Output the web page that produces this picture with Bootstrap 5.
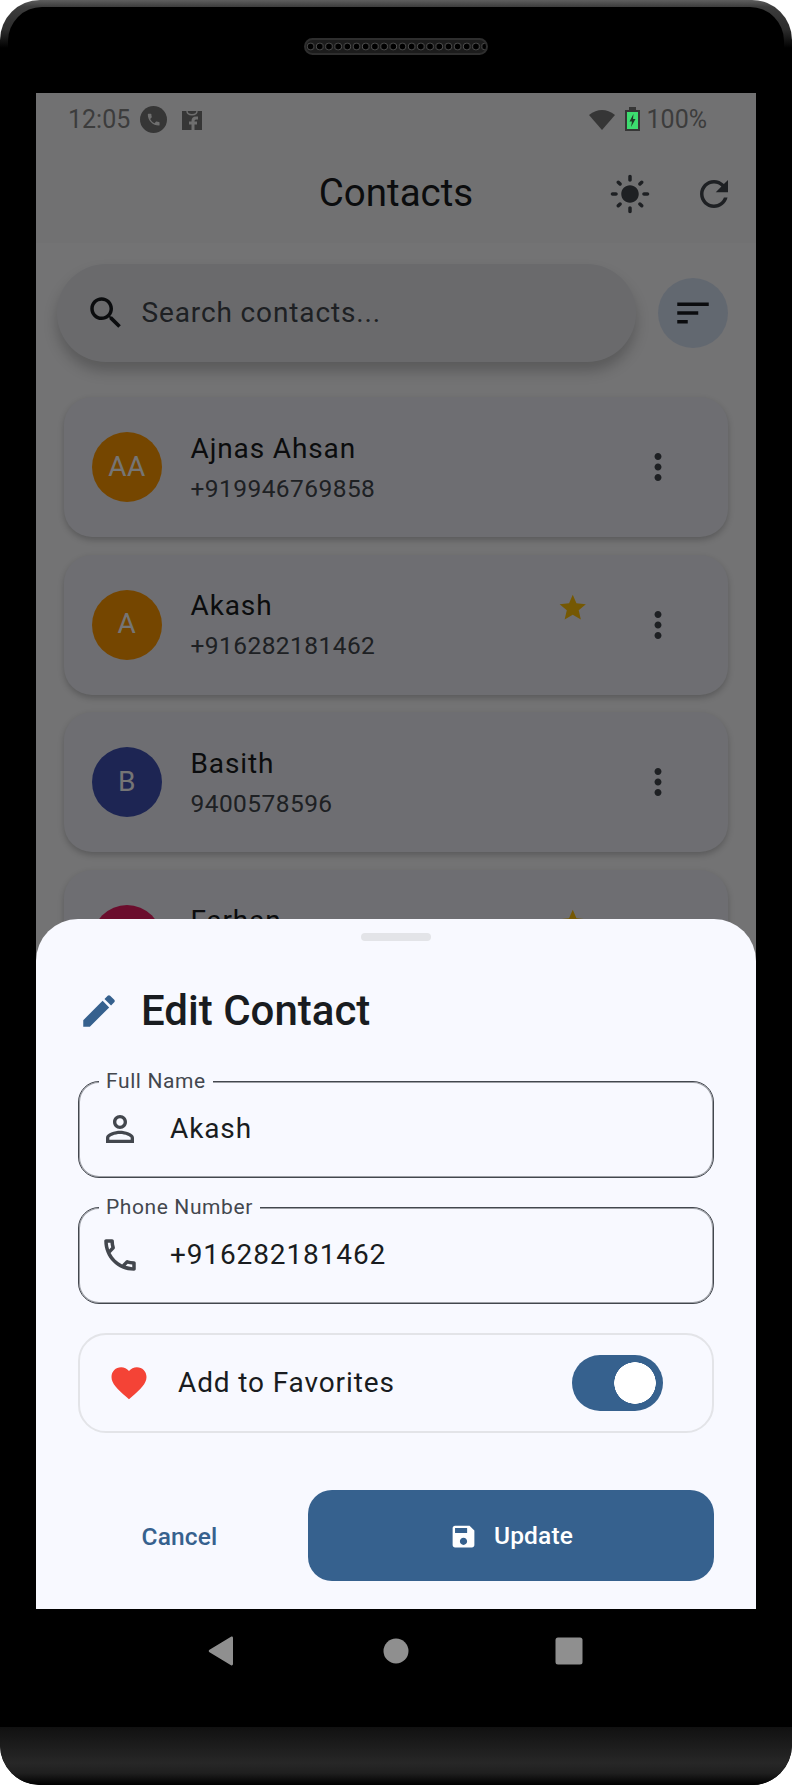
<!DOCTYPE html>
<html lang="en">
<head>
    <meta charset="utf-8">
    <title>Contacts</title>
    <link href="https://cdn.jsdelivr.net/npm/bootstrap@5.3.0/dist/css/bootstrap.min.css" rel="stylesheet">
    <style>
        :root { --app-primary: #36618e; --app-surface: #f8f9ff; --app-ink: #191c20; --app-muted: #43474e; }
        html, body { margin: 0; background: #fff; }
        body { font-family: Roboto, "Liberation Sans", sans-serif; color: var(--app-ink); }

        /* device frame */
        .device { width: 792px; height: 1785px; border-radius: 40px; overflow: hidden;
            background: linear-gradient(to bottom, #5e5e5e 0, #3c3c3c 7px, #2c2c2c 30px, #000 48px); }
        .bezel-top { margin: 7px 8px 0; background: #000; border-radius: 34px 34px 0 0; height: 86px; padding-top: 31px; }
        .speaker { width: 184px; height: 17px; border-radius: 9px; border: 2px solid #2e2e2e; background-color: #111;
            background-image: radial-gradient(circle at center, #000 0, #000 2.6px, #555 3.4px, #1c1c1c 4.2px);
            background-size: 9.2px 13px; background-position: 0 0; }
        .bezel-nav { height: 118px; background: #000; }
        .nav-slot { width: 172px; height: 84px; }
        .bezel-bottom { height: 58px; border-radius: 0 0 38px 38px;
            background: linear-gradient(to bottom, #111 0, #1d1d1d 20px, #272727 36px, #1f1f1f 46px, #000 58px); }

        /* screen */
        .screen { width: 720px; height: 1516px; margin: 0 36px; position: relative; overflow: hidden; background: #fafafc; }
        .status-bar { height: 52px; padding: 0 49px 0 32px; font-size: 25px; color: #3c3c3c; position: relative; z-index: 3; background: #717172; }
        .status-text { padding-top: 2px; }
        .app-bar { height: 98px; position: relative; padding-right: 21px; background: #f6f6f8; }
        .app-title { font-size: 38.5px; line-height: 46px; position: absolute; left: 0; right: 0; top: 25px; text-align: center; margin: 0; font-weight: 400; }
        .search-row { padding: 21px 28px 0 21px; gap: 22px; }
        .search-pill { flex: 1; height: 98px; border-radius: 49px; background: #e6e7ec; padding-left: 28px; gap: 14.5px;
            box-shadow: 0 9px 14px rgba(0, 0, 0, .22); font-size: 28px; letter-spacing: .875px; color: var(--app-muted); }
        .filter-btn { width: 70px; height: 70px; border-radius: 50%; background: #d6e2f5; }
        .contact-list { padding: 35px 28px 0; gap: 17.5px; }
        .contact-card { height: 140px; border: 0; border-radius: 28px; background: #eff0f8; padding: 0 49px 0 28px; flex-direction: row;
            box-shadow: 0 3px 6px rgba(0, 0, 0, .22); }
        .avatar { width: 70px; height: 70px; border-radius: 50%; color: #fff; font-size: 28px; letter-spacing: .5px; flex: none; padding-bottom: 1px; }
        .avatar-orange { background: #ff9800; }
        .avatar-indigo { background: #3f51b5; }
        .avatar-pink { background: #e91e63; }
        .contact-text { padding-left: 28.5px; }
        .contact-name { font-size: 28px; line-height: 42px; letter-spacing: .875px; }
        .contact-phone { font-size: 24.5px; line-height: 36px; padding-top: 1px; letter-spacing: .4375px; color: var(--app-muted); }
        .fav-star { width: 31.5px; height: 31.5px; align-self: flex-start; margin-top: 37px; margin-right: 49px; flex: none; }
        .scrim { position: absolute; inset: 0; background: rgba(0, 0, 0, .54); z-index: 1; }

        /* bottom sheet */
        .sheet { position: absolute; left: 0; right: 0; bottom: 0; z-index: 2; height: 690px; background: var(--app-surface);
            border-radius: 42px 42px 0 0; padding: 14px 42px 28px; }
        .sheet-handle { width: 70px; height: 8px; border-radius: 4px; background: #e3e4e8; margin: 0 auto; }
        .sheet-head { height: 42px; margin-top: 49px; gap: 21px; }
        .sheet-title { font-size: 42px; font-weight: 500; margin: 0; line-height: 42px; }
        .field-box { height: 97px; border: 1px solid #43474e; box-shadow: inset 0 0 0 1px rgba(67, 71, 78, .5); border-radius: 21px; position: relative;
            padding: 0 0 2px 20px; gap: 29px; font-size: 28px; letter-spacing: .875px; }
        .field-label { position: absolute; left: 20px; top: -13px; padding: 0 7px; font-size: 21px; line-height: 24px; letter-spacing: .6px;
            color: var(--app-muted); background: var(--app-surface); }
        .fav-box { height: 100px; border: 2px solid #e3e4e8; border-radius: 28px; padding: 0 49px 0 28px; gap: 28px; font-size: 28px; letter-spacing: .875px; }
        .form-switch .form-check-input.fav-switch, .form-switch .form-check-input.fav-switch:checked {
            width: 91px; height: 56px; margin: 0; float: none; border: 0; border-radius: 28px; background-color: var(--app-primary);
            background-image: radial-gradient(circle 21px at 63px 28px, #fff 20.5px, transparent 21px);
            background-position: 0 0; background-size: auto; box-shadow: none; }
        .fav-check { padding: 0; margin: 0; min-height: 0; display: flex; }
        .action-row { gap: 27px; }
        .btn-cancel, .btn-update { height: 91px; border: 0; border-radius: 24px; font-size: 24.5px; font-weight: 500; letter-spacing: .175px; padding: 3px 0 0; }
        .btn-cancel { flex: 1 1 0; color: var(--app-primary); background: transparent; }
        .btn-update { flex: 2 1 0; color: #fff; background: var(--app-primary); gap: 16px; padding-top: 2px; }
        .btn-update:hover { color: #fff; background: var(--app-primary); }
    </style>
</head>
<body>
<div class="device">
    <div class="bezel-top">
        <div class="speaker mx-auto"></div>
    </div>

    <div class="screen">
        <!-- status bar -->
        <div class="status-bar d-flex align-items-center">
            <span class="status-text">12:05</span>
            <svg width="27" height="27" viewBox="0 0 24 24" style="margin-left:10px">
                <circle cx="12" cy="12" r="12" fill="#363636"/>
                <path fill="#6f6f6f" transform="translate(5.2 5.2) scale(.58)" d="M6.62 10.79c1.44 2.83 3.76 5.14 6.59 6.59l2.2-2.2c.27-.27.67-.36 1.02-.24 1.12.37 2.33.57 3.57.57.55 0 1 .45 1 1V20c0 .55-.45 1-1 1-9.39 0-17-7.61-17-17 0-.55.45-1 1-1h3.5c.55 0 1 .45 1 1 0 1.25.2 2.45.57 3.57.11.35.03.74-.25 1.02l-2.2 2.2z"/>
            </svg>
            <svg width="20" height="22" viewBox="0 0 20 22" style="margin-left:15px">
                <path fill="#363636" d="M0 3h20v19H0z"/>
                <path fill="none" stroke="#6f6f6f" stroke-width="1.4" d="M5 3c0 5 10 5 10 0"/>
                <path fill="none" stroke="#6f6f6f" stroke-width="3" d="M16 10h-2c-2 0-3 1-3 3v9M7 15h8"/>
            </svg>
            <span class="ms-auto d-flex align-items-center">
                <svg width="26" height="21" viewBox="0 0 26 21"><path fill="#363636" d="M0 6Q13-4 26 6L13 21z"/></svg>
                <svg width="15" height="24" viewBox="0 0 15 24" style="margin-left:10px">
                    <path fill="#363636" d="M4 0h7v3h4v21H0V3h4z"/>
                    <path fill="#3ddc6f" d="M2 5h11v17H2z"/>
                    <path fill="#1f3a28" d="M8.500 7 4.500 14.500h2.500L6 20l4.500-8H8z"/>
                </svg>
                <span class="status-text" style="margin-left:7px">100%</span>
            </span>
        </div>

        <!-- app bar -->
        <div class="app-bar d-flex align-items-center justify-content-end">
            <h1 class="app-title">Contacts</h1>
            <svg width="42" height="42" viewBox="0 0 24 24" fill="#43474e" style="margin-right:42px;position:relative">
                <path d="M12 7c-2.760 0-5 2.240-5 5s2.240 5 5 5 5-2.240 5-5-2.240-5-5-5zM2 13h2c.55 0 1-.45 1-1s-.45-1-1-1H2c-.55 0-1 .45-1 1s.45 1 1 1zm18 0h2c.55 0 1-.45 1-1s-.45-1-1-1h-2c-.55 0-1 .45-1 1s.45 1 1 1zM11 2v2c0 .55.45 1 1 1s1-.45 1-1V2c0-.55-.45-1-1-1s-1 .45-1 1zm0 18v2c0 .55.45 1 1 1s1-.45 1-1v-2c0-.55-.45-1-1-1s-1 .45-1 1zM5.990 4.580c-.39-.39-1.030-.39-1.410 0-.39.39-.39 1.030 0 1.410l1.060 1.060c.39.39 1.030.39 1.410 0s.39-1.030 0-1.410L5.990 4.580zm12.370 12.370c-.39-.39-1.030-.39-1.410 0-.39.39-.39 1.030 0 1.410l1.060 1.060c.39.39 1.030.39 1.410 0 .39-.39.39-1.030 0-1.410l-1.060-1.060zm1.060-10.960c.39-.39.39-1.030 0-1.410-.39-.39-1.030-.39-1.410 0l-1.060 1.060c-.39.39-.39 1.030 0 1.410s1.030.39 1.410 0l1.060-1.060zM7.050 18.360c.39-.39.39-1.030 0-1.410-.39-.39-1.030-.39-1.410 0l-1.060 1.060c-.39.39-.39 1.030 0 1.410s1.030.39 1.410 0l1.060-1.060z"/>
            </svg>
            <svg width="42" height="42" viewBox="0 0 24 24" fill="#43474e">
                <path d="M17.650 6.350C16.200 4.900 14.210 4 12 4c-4.420 0-7.990 3.580-7.990 8s3.570 8 7.990 8c3.730 0 6.840-2.550 7.730-6h-2.080c-.82 2.330-3.040 4-5.650 4-3.310 0-6-2.690-6-6s2.690-6 6-6c1.660 0 3.140.69 4.220 1.780L13 11h7V4l-2.350 2.350z"/>
            </svg>
        </div>

        <!-- search -->
        <div class="search-row d-flex align-items-center">
            <div class="search-pill d-flex align-items-center">
                <svg width="42" height="42" viewBox="0 0 24 24" fill="#191c20"><path d="M15.500 14h-.79l-.28-.27C15.410 12.590 16 11.110 16 9.500 16 5.910 13.090 3 9.500 3S3 5.910 3 9.500 5.910 16 9.500 16c1.610 0 3.090-.59 4.230-1.570l.27.28v.79l5 4.990L20.490 19l-4.990-5zm-6 0C7.010 14 5 11.990 5 9.500S7.010 5 9.500 5 14 7.010 14 9.500 11.990 14 9.500 14z"/></svg>
                <span>Search contacts...</span>
            </div>
            <div class="filter-btn d-flex align-items-center justify-content-center">
                <svg width="42" height="42" viewBox="0 0 24 24" fill="#191c20"><path d="M3 18h6v-2H3v2zM3 6v2h18V6H3zm0 7h12v-2H3v2z"/></svg>
            </div>
        </div>

        <!-- contacts -->
        <div class="contact-list d-flex flex-column">
            <div class="card contact-card align-items-center">
                <div class="avatar avatar-orange d-flex align-items-center justify-content-center">AA</div>
                <div class="contact-text flex-grow-1">
                    <div class="contact-name">Ajnas Ahsan</div>
                    <div class="contact-phone">+919946769858</div>
                </div>
                <svg width="42" height="42" viewBox="0 0 24 24" fill="#43474e"><path d="M12 8c1.100 0 2-.9 2-2s-.9-2-2-2-2 .9-2 2 .9 2 2 2zm0 2c-1.100 0-2 .9-2 2s.9 2 2 2 2-.9 2-2-.9-2-2-2zm0 6c-1.100 0-2 .9-2 2s.9 2 2 2 2-.9 2-2-.9-2-2-2z"/></svg>
            </div>
            <div class="card contact-card align-items-center">
                <div class="avatar avatar-orange d-flex align-items-center justify-content-center">A</div>
                <div class="contact-text flex-grow-1">
                    <div class="contact-name">Akash</div>
                    <div class="contact-phone">+916282181462</div>
                </div>
                <svg class="fav-star" viewBox="0 0 24 24" fill="#ffc107"><path d="M12 17.270 18.180 21l-1.640-7.030L22 9.240l-7.190-.61L12 2 9.190 8.630 2 9.240l5.460 4.730L5.820 21z"/></svg>
                <svg width="42" height="42" viewBox="0 0 24 24" fill="#43474e"><path d="M12 8c1.100 0 2-.9 2-2s-.9-2-2-2-2 .9-2 2 .9 2 2 2zm0 2c-1.100 0-2 .9-2 2s.9 2 2 2 2-.9 2-2-.9-2-2-2zm0 6c-1.100 0-2 .9-2 2s.9 2 2 2 2-.9 2-2-.9-2-2-2z"/></svg>
            </div>
            <div class="card contact-card align-items-center">
                <div class="avatar avatar-indigo d-flex align-items-center justify-content-center">B</div>
                <div class="contact-text flex-grow-1">
                    <div class="contact-name">Basith</div>
                    <div class="contact-phone">9400578596</div>
                </div>
                <svg width="42" height="42" viewBox="0 0 24 24" fill="#43474e"><path d="M12 8c1.100 0 2-.9 2-2s-.9-2-2-2-2 .9-2 2 .9 2 2 2zm0 2c-1.100 0-2 .9-2 2s.9 2 2 2 2-.9 2-2-.9-2-2-2zm0 6c-1.100 0-2 .9-2 2s.9 2 2 2 2-.9 2-2-.9-2-2-2z"/></svg>
            </div>
            <div class="card contact-card align-items-center">
                <div class="avatar avatar-pink d-flex align-items-center justify-content-center"></div>
                <div class="contact-text flex-grow-1">
                    <div class="contact-name">Farhan</div>
                    <div class="contact-phone">&nbsp;</div>
                </div>
                <svg class="fav-star" viewBox="0 0 24 24" fill="#ffc107"><path d="M12 17.270 18.180 21l-1.640-7.030L22 9.240l-7.190-.61L12 2 9.190 8.630 2 9.240l5.460 4.730L5.820 21z"/></svg>
                <div style="width:42px"></div>
            </div>
        </div>

        <div class="scrim"></div>

        <!-- edit sheet -->
        <div class="sheet d-flex flex-column">
            <div class="sheet-handle"></div>
            <div class="sheet-head d-flex align-items-center">
                <svg width="42" height="42" viewBox="0 0 24 24" fill="#36618e"><path d="M3 17.250V21h3.750L17.810 9.940l-3.750-3.750L3 17.250zM20.710 7.040c.39-.39.39-1.020 0-1.410l-2.340-2.340c-.39-.39-1.020-.39-1.410 0l-1.830 1.830 3.750 3.750 1.830-1.830z"/></svg>
                <h2 class="sheet-title">Edit Contact</h2>
            </div>

            <div class="field-box d-flex align-items-center" style="margin-top:49px">
                <span class="field-label">Full Name</span>
                <svg width="42" height="42" viewBox="0 0 24 24" fill="#43474e"><path d="M12 5.900c1.160 0 2.100.94 2.100 2.100s-.94 2.100-2.100 2.100S9.900 9.160 9.900 8s.94-2.100 2.100-2.100m0 9c2.970 0 6.100 1.460 6.100 2.100v1.100H5.900V17c0-.64 3.130-2.100 6.100-2.100M12 4C9.790 4 8 5.790 8 8s1.790 4 4 4 4-1.790 4-4-1.790-4-4-4zm0 9c-2.670 0-8 1.340-8 4v3h16v-3c0-2.660-5.330-4-8-4z"/></svg>
                <span>Akash</span>
            </div>
            <div class="field-box d-flex align-items-center" style="margin-top:29px">
                <span class="field-label">Phone Number</span>
                <svg width="42" height="42" viewBox="0 0 24 24" fill="#43474e"><path d="M6.540 5c.06.89.21 1.760.45 2.590l-1.200 1.200c-.41-1.200-.67-2.470-.76-3.790h1.510m9.860 12.020c.85.24 1.720.39 2.600.45v1.490c-1.320-.09-2.590-.35-3.800-.75l1.200-1.190M7.500 3H4c-.55 0-1 .45-1 1 0 9.390 7.610 17 17 17 .55 0 1-.45 1-1v-3.490c0-.55-.45-1-1-1-1.240 0-2.450-.2-3.570-.57-.1-.04-.21-.05-.31-.05-.26 0-.51.1-.71.29l-2.200 2.200c-2.830-1.450-5.150-3.760-6.590-6.590l2.200-2.200c.28-.28.36-.67.25-1.020C8.700 6.450 8.500 5.250 8.500 4c0-.55-.45-1-1-1z"/></svg>
                <span>+916282181462</span>
            </div>

            <div class="fav-box d-flex align-items-center" style="margin-top:29px">
                <svg width="42" height="42" viewBox="0 0 24 24" fill="#f44336"><path d="M12 21.350l-1.450-1.320C5.400 15.360 2 12.280 2 8.500 2 5.420 4.420 3 7.500 3c1.740 0 3.410.81 4.500 2.090C13.090 3.810 14.760 3 16.500 3 19.580 3 22 5.420 22 8.500c0 3.780-3.400 6.860-8.550 11.540L12 21.350z"/></svg>
                <span class="flex-grow-1">Add to Favorites</span>
                <div class="form-check form-switch fav-check">
                    <input class="form-check-input fav-switch" type="checkbox" role="switch" checked aria-label="Add to Favorites">
                </div>
            </div>

            <div class="action-row d-flex" style="margin-top:57px">
                <button type="button" class="btn btn-cancel">Cancel</button>
                <button type="button" class="btn btn-update d-flex align-items-center justify-content-center">
                    <svg width="29" height="29" viewBox="0 0 24 24" fill="#fff"><path d="M17 3H5c-1.110 0-2 .9-2 2v14c0 1.100.89 2 2 2h14c1.100 0 2-.9 2-2V7l-4-4zm-5 16c-1.660 0-3-1.340-3-3s1.340-3 3-3 3 1.340 3 3-1.340 3-3 3zm3-10H5V5h10v4z"/></svg>
                    <span>Update</span>
                </button>
            </div>
        </div>
    </div>

    <!-- android nav keys -->
    <div class="bezel-nav d-flex justify-content-center">
        <div class="nav-slot d-flex align-items-center justify-content-center">
            <svg width="30" height="30" viewBox="0 0 30 30" style="margin-left:-2px"><path fill="#8f8f8f" d="M1.500 13.700 23 .8c.9-.5 2 .1 2 1.100v26.200c0 1-1.100 1.600-2 1.100L1.500 16.300c-1-.6-1-2 0-2.600z"/></svg>
        </div>
        <div class="nav-slot d-flex align-items-center justify-content-center">
            <svg width="26" height="26" viewBox="0 0 26 26"><circle cx="13" cy="13" r="12.500" fill="#8f8f8f"/></svg>
        </div>
        <div class="nav-slot d-flex align-items-center justify-content-center">
            <svg width="28" height="28" viewBox="0 0 28 28" style="margin-left:1px"><rect x=".5" y=".5" width="27" height="27" rx="2.500" fill="#8f8f8f"/></svg>
        </div>
    </div>
    <div class="bezel-bottom"></div>
</div>
</body>
</html>
